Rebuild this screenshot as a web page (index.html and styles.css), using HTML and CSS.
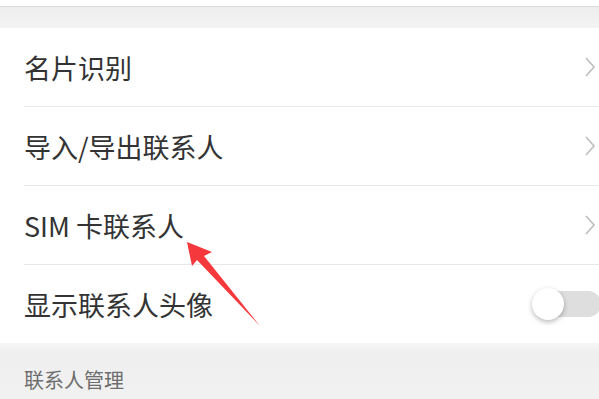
FILE: index.html
```html
<!DOCTYPE html>
<html>
<head>
<meta charset="utf-8">
<link rel="stylesheet" href="styles.css">
</head>
<body>
<div class="page">
  <div class="topstrip"></div>
  <div class="band"></div>
  <div class="list">
    <div class="row"><span class="label">名片识别</span><svg class="chev" width="12" height="22" viewBox="0 0 12 22"><path d="M2 2 L10 11 L2 20" fill="none" stroke="#bdbdbd" stroke-width="1.6"/></svg></div>
    <div class="row"><span class="label">导入/导出联系人</span><svg class="chev" width="12" height="22" viewBox="0 0 12 22"><path d="M2 2 L10 11 L2 20" fill="none" stroke="#bdbdbd" stroke-width="1.6"/></svg></div>
    <div class="row"><span class="label">SIM 卡联系人</span><svg class="chev" width="12" height="22" viewBox="0 0 12 22"><path d="M2 2 L10 11 L2 20" fill="none" stroke="#bdbdbd" stroke-width="1.6"/></svg></div>
    <div class="row last"><span class="label">显示联系人头像</span><div class="toggle"><div class="knob"></div></div></div>
  </div>
  <div class="section"><span class="section-title">联系人管理</span></div>
  <svg class="arrow" width="599" height="399" viewBox="0 0 599 399">
    <polygon points="187,242 212,252 204,256 260,326 197,260 192,266" fill="#f5383b"/>
  </svg>
</div>
</body>
</html>
```
FILE: styles.css
```css
html, body {
  margin: 0;
  padding: 0;
  background: #ffffff;
}
.page {
  position: relative;
  width: 599px;
  height: 399px;
  overflow: hidden;
  font-family: "Noto Sans CJK SC", "Noto Sans", sans-serif;
}
.topstrip {
  height: 6px;
  background: #ffffff;
  border-bottom: 1px solid #dcdcdc;
}
.band {
  height: 21px;
  background: linear-gradient(#eeeeee, #f3f3f3);
}
.list {
  background: #ffffff;
}
.row {
  height: 78px;
  display: flex;
  align-items: center;
  justify-content: space-between;
  margin-left: 24px;
  border-bottom: 1px solid #e8e8e8;
}
.row.last {
  border-bottom: none;
}
.label {
  font-size: 27px;
  color: #333333;
  line-height: 1;
}
.chev {
  margin-right: 3px;
}
.toggle {
  position: relative;
  width: 68px;
  height: 26px;
  border-radius: 13px;
  background: #dedede;
  margin-right: -2px;
}
.knob {
  position: absolute;
  left: -1px;
  top: -3px;
  width: 32px;
  height: 32px;
  border-radius: 50%;
  background: #ffffff;
  box-shadow: 0 2px 5px rgba(0, 0, 0, 0.28);
}
.section {
  height: 56px;
  background: linear-gradient(#f6f6f6 0px, #efefef 10px, #f1f1f1 56px);
  padding-left: 24px;
  display: flex;
  align-items: flex-end;
  box-sizing: border-box;
  padding-bottom: 9px;
}
.section-title {
  font-size: 20px;
  color: #6d6d6d;
  line-height: 1;
}
.arrow {
  position: absolute;
  left: 0;
  top: 0;
  pointer-events: none;
}
```
